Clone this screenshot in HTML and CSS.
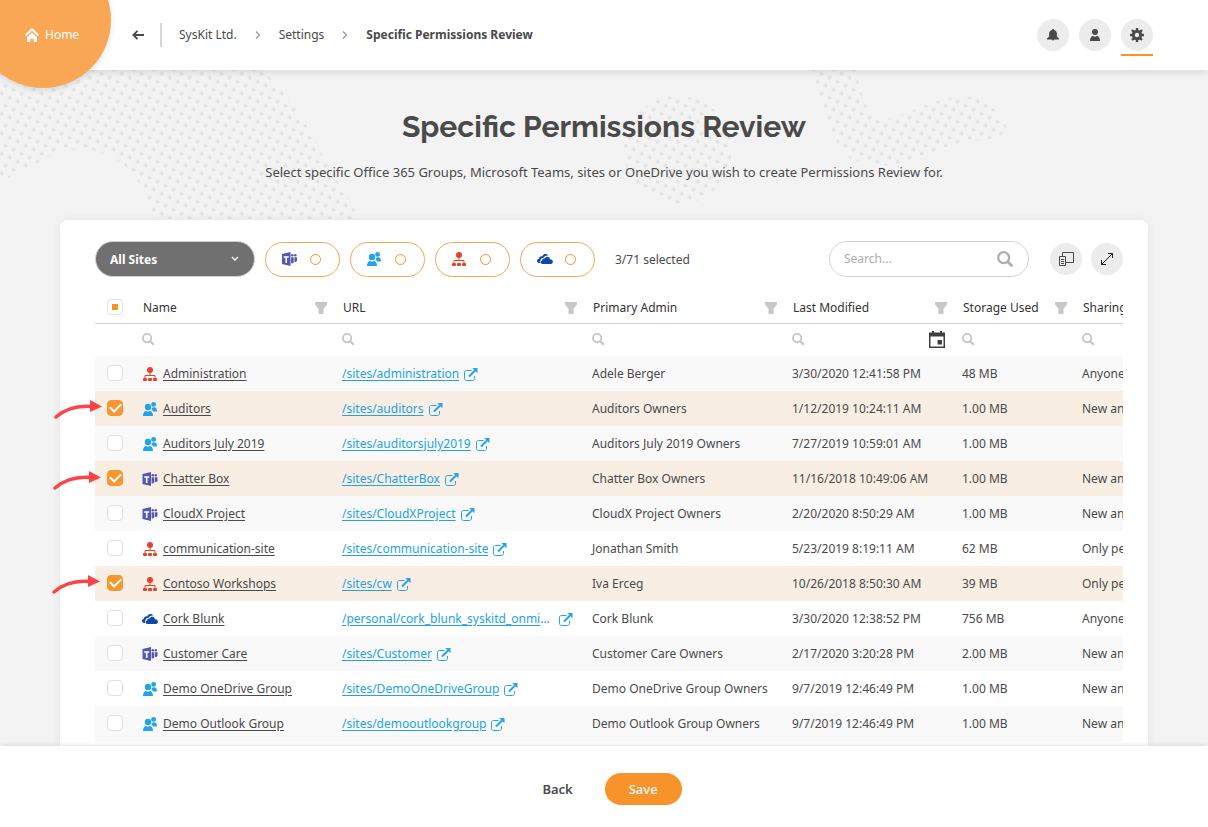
FILE: index.html
```html
<!DOCTYPE html>
<html lang="en">
<head>
<meta charset="utf-8">
<meta name="viewport" content="width=device-width, initial-scale=1">
<title>Specific Permissions Review</title>
<link rel="stylesheet" href="styles.css">
</head>
<body>
<svg class="sprite" aria-hidden="true">
  <symbol id="i-site" viewBox="0 0 14 14">
    <circle cx="7" cy="3" r="3"/><path d="M7 5v3.5M2 11V8.500h10V11" fill="none" stroke="currentColor" stroke-width="1"/><rect x="0" y="11" width="4" height="3" rx="1"/><rect x="5" y="11" width="4" height="3" rx="1"/><rect x="10" y="11" width="4" height="3" rx="1"/>
  </symbol>
  <symbol id="i-group" viewBox="0 0 14 14">
    <circle cx="5" cy="5" r="3.200"/><path d="M0 14c0-3 1.400-5 3-5l2 .8L7 9c1.600 0 3 2 3 5z"/><circle cx="10.600" cy="2.400" r="2.400"/><path d="M8.700 6.700c.4-.9 1-1.500 1.500-1.500l.8.400.9-.4c1.200.2 2.100 1.600 2.100 4.300h-3.800c-.3-.8-.8-1.200-1.500-1.400z"/>
  </symbol>
  <symbol id="i-teams" viewBox="0 0 15 14">
    <path d="M0 2 8.500 0v14L0 12z"/><path d="M1.700 4.300h5v1.500H5v5.100H3.400V5.800H1.700z" fill="#fff"/><circle cx="10.300" cy="3.200" r="1.300"/><circle cx="13.300" cy="3.300" r="1.200"/><path d="M9.100 5.300h2.600v5.200l-1.300 1-1.300-.3zM12.400 5.300H15v3.500l-1.300 1.400-1.300-.4z"/>
  </symbol>
  <symbol id="i-drive" viewBox="0 0 16 10">
    <path d="M3.400 9H2.200C-.8 8.600-.5 5 1.900 4.700 2 2.900 3.700 1.800 5.200 2.400 6.500-.4 10-.7 11.400 1.800c-2-.6-3.800.2-4.700 1.900-1.900-.1-3.200 1-3.200 2.700C2.600 7 2.700 8.200 3.400 9z"/><path d="M5.400 10C3 9.700 3.200 6.700 5.200 6.500 5.200 4.700 6.600 4.100 7.700 4.500 8.700 2.200 12.300 2.200 12.900 5.200c3.600-.2 4.100 4.500.8 4.800z"/>
  </symbol>
  <symbol id="i-ext" viewBox="0 0 14 13">
    <path d="M7.500 2.500H2.500c-1 0-2 .6-2 1.700v6.300c0 1 .9 2 2 2h6c1 0 2-.9 2-2V8" fill="none" stroke="currentColor" stroke-width="1"/><path d="M5 8.500 11 2.500" fill="none" stroke="currentColor" stroke-width="2"/><path d="M8.300 0H13.500v5.200z"/>
  </symbol>
  <symbol id="i-search" viewBox="0 0 14 14">
    <circle cx="5.500" cy="5.500" r="4.500" fill="none" stroke="currentColor" stroke-width="1.900"/><path d="m8.600 8.600 4 4" fill="none" stroke="currentColor" stroke-width="2.200"/>
  </symbol>
  <symbol id="i-filter" viewBox="0 0 12 12">
    <path d="M0 0h12v2.500L8.500 7v5h-5V7L0 2.500z"/>
  </symbol>
  <symbol id="i-chev" viewBox="0 0 8 10">
    <path d="m2 1.500 3.500 3.500L2 8.500" fill="none" stroke="currentColor" stroke-width="1.300"/>
  </symbol>
  <symbol id="i-pointer" viewBox="0 0 50 22">
    <path d="M3 17Q17 5 38 6.500" fill="none" stroke="currentColor" stroke-width="3.500" stroke-linecap="round"/><path d="M37 0 49 6.500 37 12z"/>
  </symbol>
</svg>

<header class="topbar">
  <a class="home" href="#">
    <svg class="ico" width="14" height="14" viewBox="0 0 14 14"><path d="M.7 7.200 7 1.300l6.300 5.900" fill="none" stroke="currentColor" stroke-width="1.900"/><path d="M7 4.600 12 9.200V14H8.600v-3.300H5.400V14H2V9.200z"/></svg>
    <span>Home</span>
  </a>
  <nav class="crumbs" aria-label="Breadcrumb">
    <button class="back" type="button" aria-label="Back"><svg class="ico" width="12" height="10" viewBox="0 0 12 10"><path d="M12 5H1.500M5.500.9 1.400 5l4.100 4.100" fill="none" stroke="currentColor" stroke-width="1.900"/></svg></button>
    <a href="#">SysKit Ltd.</a>
    <svg class="ico chev" width="8" height="10"><use href="#i-chev"/></svg>
    <a href="#">Settings</a>
    <svg class="ico chev" width="8" height="10"><use href="#i-chev"/></svg>
    <strong>Specific Permissions Review</strong>
  </nav>
  <div class="actions">
    <button class="round" type="button" aria-label="Notifications"><svg class="ico" width="12" height="12" viewBox="0 0 12 12"><path d="M6 0c.7 0 1 .4 1 1 1.900.4 2.900 2 2.900 4v2.600L12 9.500v1H7.300a1.400 1.400 0 0 1-2.600 0H0v-1l2.100-1.900V5c0-2 1-3.600 2.900-4 0-.6.300-1 1-1z"/></svg></button>
    <button class="round" type="button" aria-label="Account"><svg class="ico" width="12" height="12" viewBox="0 0 12 12"><circle cx="6" cy="3" r="3"/><path d="M1 12c0-3.200 1.600-5 3-5l2 .8L8 7c1.400 0 3 1.800 3 5z"/></svg></button>
    <button class="round active" type="button" aria-label="Settings"><svg class="ico" width="14" height="14" viewBox="0 0 14 14"><circle cx="7" cy="7" r="3.700" fill="none" stroke="currentColor" stroke-width="3"/><path d="M7 0v3M7 11v3M0 7h3M11 7h3M2 2l2.200 2.200M9.800 9.800 12 12M12 2 9.800 4.200M4.200 9.800 2 12" fill="none" stroke="currentColor" stroke-width="2.400"/></svg></button>
  </div>
</header>

<main class="page">
  <svg class="dots" width="1208" height="150" viewBox="0 70 1208 150" aria-hidden="true">
    <defs><pattern id="dot" x="-4.470" y="-4.470" width="8.944" height="8.944" patternUnits="userSpaceOnUse" patternTransform="translate(345.700 205.700) rotate(26.565)"><circle cx="4.470" cy="4.470" r="2" fill="#e3e3e3"/></pattern></defs>
    <g fill="url(#dot)">
      <path d="M0 70H262C285 90 300 112 318 145 330 175 352 195 358 220H155C150 200 140 180 125 166 95 140 60 148 38 163 20 172 10 176 0 184z"/>
      <circle cx="678" cy="150" r="54"/>
      <path d="M811 70H857C860 95 868 118 884 120 910 115 930 98 965 96 990 98 1010 122 1006 132 990 144 965 138 945 148 915 164 885 172 850 158 830 140 818 100 811 70z"/>
    </g>
  </svg>
  <h1>Specific Permissions Review</h1>
  <p class="lead">Select specific Office 365 Groups, Microsoft Teams, sites or OneDrive you wish to create Permissions Review for.</p>

  <section class="card">
    <svg class="pointer p1" width="50" height="22" aria-hidden="true"><use href="#i-pointer"/></svg>
    <svg class="pointer p2" width="50" height="22" aria-hidden="true"><use href="#i-pointer"/></svg>
    <svg class="pointer p3" width="50" height="22" aria-hidden="true"><use href="#i-pointer"/></svg>
    <div class="toolbar">
      <div class="scope">
        <select aria-label="Scope"><option>All Sites</option></select>
        <svg class="ico" width="8" height="6" viewBox="0 0 8 6"><path d="m1 1 3 3 3-3" fill="none" stroke="currentColor" stroke-width="1.400"/></svg>
      </div>
      <div class="pills">
        <label class="pill" aria-label="Microsoft Teams"><svg class="ico teams" width="15" height="14"><use href="#i-teams"/></svg><input type="checkbox"></label>
        <label class="pill" aria-label="Office 365 Groups"><svg class="ico group" width="14" height="14"><use href="#i-group"/></svg><input type="checkbox"></label>
        <label class="pill" aria-label="Sites"><svg class="ico site" width="14" height="14"><use href="#i-site"/></svg><input type="checkbox"></label>
        <label class="pill" aria-label="OneDrive"><svg class="ico drive" width="16" height="10"><use href="#i-drive"/></svg><input type="checkbox"></label>
      </div>
      <span class="count">3/71 selected</span>
      <label class="search"><input type="text" placeholder="Search..." aria-label="Search"><svg class="ico" width="17" height="17"><use href="#i-search"/></svg></label>
      <div class="tools">
        <button class="round" type="button" aria-label="Choose columns"><svg width="15" height="14" viewBox="0 0 15 14" fill="none" stroke="#4a4a4a" stroke-width="1"><path d="M3.500 4V.5h11v10H7M.5 4.500h6v9h-6zM2 7.500h3M2 9.500h3M2 11.500h3"/></svg></button>
        <button class="round" type="button" aria-label="Expand"><svg width="12" height="12" viewBox="0 0 12 12" fill="none" stroke="#222" stroke-width="1"><path d="M.5 11.500l11-11M7 .5h4.500V5M5 11.500H.5V7"/></svg></button>
      </div>
    </div>

    <div class="grid">
      <table>
        <colgroup><col class="c-check"><col class="c-name"><col class="c-url"><col class="c-admin"><col class="c-date"><col class="c-size"><col class="c-share"></colgroup>
        <thead>
          <tr class="heads">
            <th class="check"><input class="box partial" type="checkbox" aria-label="Select all"></th>
            <th><div class="head">Name<svg class="ico" width="12" height="12"><use href="#i-filter"/></svg></div></th>
            <th><div class="head">URL<svg class="ico" width="12" height="12"><use href="#i-filter"/></svg></div></th>
            <th><div class="head">Primary Admin<svg class="ico" width="12" height="12"><use href="#i-filter"/></svg></div></th>
            <th><div class="head">Last Modified<svg class="ico" width="12" height="12"><use href="#i-filter"/></svg></div></th>
            <th><div class="head">Storage Used<svg class="ico" width="12" height="12"><use href="#i-filter"/></svg></div></th>
            <th><div class="head">Sharing<svg class="ico" width="12" height="12"><use href="#i-filter"/></svg></div></th>
          </tr>
          <tr class="finders">
            <td></td>
            <td><div class="find"><svg class="ico" width="13" height="13"><use href="#i-search"/></svg><input type="text" aria-label="Filter name"></div></td>
            <td><div class="find"><svg class="ico" width="13" height="13"><use href="#i-search"/></svg><input type="text" aria-label="Filter URL"></div></td>
            <td><div class="find"><svg class="ico" width="13" height="13"><use href="#i-search"/></svg><input type="text" aria-label="Filter primary admin"></div></td>
            <td><div class="find"><svg class="ico" width="13" height="13"><use href="#i-search"/></svg><input type="text" aria-label="Filter last modified"><button class="cal" type="button" aria-label="Pick date"><svg class="ico" width="16" height="17" viewBox="0 0 16 17"><path d="M0 1.500h3V0h2v1.500h6V0h2v1.500h3V17H0zM1.500 5.500v10h13v-10z" fill-rule="evenodd"/><path d="M8.500 9H13v4.500H8.500z"/></svg></button></div></td>
            <td><div class="find"><svg class="ico" width="13" height="13"><use href="#i-search"/></svg><input type="text" aria-label="Filter storage used"></div></td>
            <td><div class="find"><svg class="ico" width="13" height="13"><use href="#i-search"/></svg><input type="text" aria-label="Filter sharing"></div></td>
          </tr>
        </thead>
        <tbody>
          <tr><td class="check"><input class="box" type="checkbox" aria-label="Administration"></td><td><div class="cell"><svg class="ico site" width="14" height="14"><use href="#i-site"/></svg><a class="name" href="#">Administration</a></div></td><td><div class="cell"><a class="url" href="#">/sites/administration</a><svg class="ico ext" width="14" height="13"><use href="#i-ext"/></svg></div></td><td>Adele Berger</td><td>3/30/2020 12:41:58 PM</td><td>48 MB</td><td>Anyone</td></tr>
          <tr class="on"><td class="check"><input class="box" type="checkbox" aria-label="Auditors" checked></td><td><div class="cell"><svg class="ico group" width="14" height="14"><use href="#i-group"/></svg><a class="name" href="#">Auditors</a></div></td><td><div class="cell"><a class="url" href="#">/sites/auditors</a><svg class="ico ext" width="14" height="13"><use href="#i-ext"/></svg></div></td><td>Auditors Owners</td><td>1/12/2019 10:24:11 AM</td><td>1.00 MB</td><td>New and existing guests</td></tr>
          <tr><td class="check"><input class="box" type="checkbox" aria-label="Auditors July 2019"></td><td><div class="cell"><svg class="ico group" width="14" height="14"><use href="#i-group"/></svg><a class="name" href="#">Auditors July 2019</a></div></td><td><div class="cell"><a class="url" href="#">/sites/auditorsjuly2019</a><svg class="ico ext" width="14" height="13"><use href="#i-ext"/></svg></div></td><td>Auditors July 2019 Owners</td><td>7/27/2019 10:59:01 AM</td><td>1.00 MB</td><td></td></tr>
          <tr class="on"><td class="check"><input class="box" type="checkbox" aria-label="Chatter Box" checked></td><td><div class="cell"><svg class="ico teams" width="15" height="14"><use href="#i-teams"/></svg><a class="name" href="#">Chatter Box</a></div></td><td><div class="cell"><a class="url" href="#">/sites/ChatterBox</a><svg class="ico ext" width="14" height="13"><use href="#i-ext"/></svg></div></td><td>Chatter Box Owners</td><td>11/16/2018 10:49:06 AM</td><td>1.00 MB</td><td>New and existing guests</td></tr>
          <tr><td class="check"><input class="box" type="checkbox" aria-label="CloudX Project"></td><td><div class="cell"><svg class="ico teams" width="15" height="14"><use href="#i-teams"/></svg><a class="name" href="#">CloudX Project</a></div></td><td><div class="cell"><a class="url" href="#">/sites/CloudXProject</a><svg class="ico ext" width="14" height="13"><use href="#i-ext"/></svg></div></td><td>CloudX Project Owners</td><td>2/20/2020 8:50:29 AM</td><td>1.00 MB</td><td>New and existing guests</td></tr>
          <tr><td class="check"><input class="box" type="checkbox" aria-label="communication-site"></td><td><div class="cell"><svg class="ico site" width="14" height="14"><use href="#i-site"/></svg><a class="name" href="#">communication-site</a></div></td><td><div class="cell"><a class="url" href="#">/sites/communication-site</a><svg class="ico ext" width="14" height="13"><use href="#i-ext"/></svg></div></td><td>Jonathan Smith</td><td>5/23/2019 8:19:11 AM</td><td>62 MB</td><td>Only people</td></tr>
          <tr class="on"><td class="check"><input class="box" type="checkbox" aria-label="Contoso Workshops" checked></td><td><div class="cell"><svg class="ico site" width="14" height="14"><use href="#i-site"/></svg><a class="name" href="#">Contoso Workshops</a></div></td><td><div class="cell"><a class="url" href="#">/sites/cw</a><svg class="ico ext" width="14" height="13"><use href="#i-ext"/></svg></div></td><td>Iva Erceg</td><td>10/26/2018 8:50:30 AM</td><td>39 MB</td><td>Only people</td></tr>
          <tr><td class="check"><input class="box" type="checkbox" aria-label="Cork Blunk"></td><td><div class="cell"><svg class="ico drive" width="15" height="10"><use href="#i-drive"/></svg><a class="name" href="#">Cork Blunk</a></div></td><td><div class="cell"><a class="url" href="#">/personal/cork_blunk_syskitd_onmicrosoft</a><svg class="ico ext" width="14" height="13"><use href="#i-ext"/></svg></div></td><td>Cork Blunk</td><td>3/30/2020 12:38:52 PM</td><td>756 MB</td><td>Anyone</td></tr>
          <tr><td class="check"><input class="box" type="checkbox" aria-label="Customer Care"></td><td><div class="cell"><svg class="ico teams" width="15" height="14"><use href="#i-teams"/></svg><a class="name" href="#">Customer Care</a></div></td><td><div class="cell"><a class="url" href="#">/sites/Customer</a><svg class="ico ext" width="14" height="13"><use href="#i-ext"/></svg></div></td><td>Customer Care Owners</td><td>2/17/2020 3:20:28 PM</td><td>2.00 MB</td><td>New and existing guests</td></tr>
          <tr><td class="check"><input class="box" type="checkbox" aria-label="Demo OneDrive Group"></td><td><div class="cell"><svg class="ico group" width="14" height="14"><use href="#i-group"/></svg><a class="name" href="#">Demo OneDrive Group</a></div></td><td><div class="cell"><a class="url" href="#">/sites/DemoOneDriveGroup</a><svg class="ico ext" width="14" height="13"><use href="#i-ext"/></svg></div></td><td>Demo OneDrive Group Owners</td><td>9/7/2019 12:46:49 PM</td><td>1.00 MB</td><td>New and existing guests</td></tr>
          <tr><td class="check"><input class="box" type="checkbox" aria-label="Demo Outlook Group"></td><td><div class="cell"><svg class="ico group" width="14" height="14"><use href="#i-group"/></svg><a class="name" href="#">Demo Outlook Group</a></div></td><td><div class="cell"><a class="url" href="#">/sites/demooutlookgroup</a><svg class="ico ext" width="14" height="13"><use href="#i-ext"/></svg></div></td><td>Demo Outlook Group Owners</td><td>9/7/2019 12:46:49 PM</td><td>1.00 MB</td><td>New and existing guests</td></tr>
        </tbody>
      </table>
    </div>
  </section>
</main>

<footer class="footer">
  <button class="btn" type="button">Back</button>
  <button class="btn primary" type="button">Save</button>
</footer>
</body>
</html>
```

FILE: styles.css
```css
* { box-sizing: border-box; }
body {
  margin: 0;
  height: 100vh;
  display: flex;
  flex-direction: column;
  overflow: hidden;
  background: #f3f3f3;
  color: #4a4a4a;
  font-family: "Segoe UI", "Noto Sans", "Open Sans", sans-serif;
  font-size: 12px;
  line-height: 20px;
}
button, input, select { font: inherit; color: inherit; margin: 0; }
button { border: 0; padding: 0; background: none; cursor: pointer; }
a { color: inherit; }
.sprite { position: absolute; width: 0; height: 0; }
.ico { display: block; flex: none; fill: currentColor; }
.site { color: #e8412a; }
.group { color: #23a3ef; }
.teams { color: #5558af; }
.drive { color: #0c48ad; }

.topbar {
  position: relative;
  z-index: 2;
  flex: none;
  display: flex;
  align-items: center;
  justify-content: space-between;
  height: 70px;
  padding: 0 55px 0 132px;
  background: #fff;
  box-shadow: 0 2px 8px rgba(0, 0, 0, .12);
}
.home {
  position: absolute;
  left: -25px;
  top: -48px;
  width: 136px;
  height: 136px;
  padding: 30px 0 0 50px;
  display: flex;
  align-items: center;
  gap: 6px;
  border-radius: 50%;
  background: #faa755;
  box-shadow: 0 2px 6px rgba(0, 0, 0, .12);
  color: #fff;
  text-decoration: none;
}
.crumbs { display: flex; align-items: center; gap: 17px; }
.crumbs a { text-decoration: none; }
.back { display: flex; align-items: center; height: 24px; padding-right: 16px; border-right: 2px solid #d8d8d8; }
.chev { color: #999; }
.actions { display: flex; gap: 10px; }
.round {
  position: relative;
  display: grid;
  place-items: center;
  width: 32px;
  height: 32px;
  border-radius: 50%;
  background: #ececec;
}
.round.active::after {
  content: "";
  position: absolute;
  left: 0;
  right: 0;
  bottom: -5px;
  height: 2px;
  background: #f8922b;
}

.page {
  position: relative;
  flex: 1;
  min-height: 0;
  display: flex;
  flex-direction: column;
  padding: 37px 60px 0;
}
.dots { position: absolute; left: 0; top: 0; }
h1, .lead { position: relative; text-align: center; }
h1 { margin: 0; font: 700 30px/40px Raleway, Lato, sans-serif; }
.lead { margin: 15px 0 38px; font-size: 13px; }

.card {
  position: relative;
  flex: 1;
  min-height: 0;
  display: flex;
  flex-direction: column;
  padding: 21px 25px 0 35px;
  border-radius: 8px 8px 0 0;
  background: #fff;
  box-shadow: 0 0 10px rgba(0, 0, 0, .07);
}
.pointer { position: absolute; z-index: 1; fill: currentColor; color: #fc4447; }
.p1 { left: -7px; top: 180px; }
.p2 { left: -8px; top: 251px; }
.p3 { left: -9px; top: 355px; }

.toolbar { flex: none; display: flex; align-items: center; height: 36px; }
.scope { position: relative; width: 160px; color: #fff; }
.scope select {
  display: block;
  width: 100%;
  height: 36px;
  padding: 1px 14px 0;
  border: 1px solid #d0d0d0;
  border-radius: 18px;
  background: #707070;
  font-weight: 700;
  appearance: none;
}
.scope .ico { position: absolute; right: 16px; top: 15px; pointer-events: none; }
.pills { display: flex; gap: 10px; margin: 0 20px 0 10px; }
.pill {
  display: flex;
  align-items: center;
  justify-content: space-between;
  width: 75px;
  height: 35px;
  padding: 0 18px 0 16px;
  border: 1px solid #f9a654;
  border-radius: 18px;
}
.pill input {
  appearance: none;
  width: 11px;
  height: 11px;
  border: 1px solid #f8922b;
  border-radius: 50%;
}
.count { padding-top: 2px; }
.search {
  display: flex;
  align-items: center;
  width: 200px;
  height: 36px;
  margin-left: auto;
  padding: 0 14px;
  border: 1px solid #d3d3d3;
  border-radius: 18px;
  color: #adadad;
}
.search input { flex: 1; min-width: 0; padding: 0; border: 0; outline: 0; background: none; }
.search input::placeholder { color: #adadad; opacity: 1; }
.tools { display: flex; gap: 9px; margin-left: 21px; }

.grid { flex: 1; min-height: 0; margin-top: 16px; overflow: hidden; }
table { width: 1130px; table-layout: fixed; border-collapse: collapse; }
.c-check { width: 40px; }
.c-name, .c-admin { width: 200px; }
.c-url { width: 250px; }
.c-date { width: 170px; }
.c-size { width: 120px; }
.c-share { width: 150px; }
th, td { padding: 0 7px; text-align: left; white-space: nowrap; }
th { color: #333; font-weight: 400; }
.heads th { height: 30px; border-bottom: 1px solid #d3d3d3; }
.head { display: flex; align-items: center; justify-content: space-between; padding: 1px 1px 0; }
.head .ico { color: #c8c8c8; }
.finders td { height: 33px; }
.find { display: flex; align-items: center; gap: 6px; color: #c4c4c4; }
.find input { flex: 1; min-width: 0; width: 0; padding: 0; border: 0; background: none; }
.cal { color: #3f3f46; margin-right: 3px; }
tbody td { height: 35px; }
tbody tr:nth-child(odd) { background: #f9f9f9; }
tbody tr.on { background: #f9eee4; }
th.check, td.check { padding: 0 0 2px; }
.box {
  appearance: none;
  display: grid;
  place-items: center;
  width: 16px;
  height: 16px;
  margin: 0 auto;
  border: 1px solid #e0e0e0;
  border-radius: 4px;
  background: #fff;
}
.box.partial::before { content: ""; width: 6px; height: 6px; background: #f8922b; }
.box:checked { border-color: #f8962f; background: #f8962f; }
.box:checked::before {
  content: "";
  width: 9px;
  height: 5px;
  margin-bottom: 2px;
  border: solid #fff;
  border-width: 0 0 2px 2px;
  transform: rotate(-45deg);
}
.cell { display: flex; align-items: center; gap: 5px; }
.cell > .ico { width: 16px; }
.name, .url { text-underline-offset: 2px; }
.url { color: #23a3e6; max-width: 212px; overflow: hidden; text-overflow: ellipsis; }
.cell > .ext { width: 14px; padding-top: 1px; height: 14px; color: #23a3ef; }

.footer {
  position: relative;
  z-index: 2;
  flex: none;
  display: flex;
  align-items: center;
  justify-content: center;
  gap: 16px;
  height: 81px;
  padding-top: 5px;
  background: #fff;
  box-shadow: 0 -1px 5px rgba(0, 0, 0, .1);
}
.btn { min-width: 62px; height: 32px; padding: 0 16px; border-radius: 16px; font-size: 13px; font-weight: 600; }
.primary { padding: 0 24px; background: #f8922b; color: #fff; font-weight: 500; }
```
